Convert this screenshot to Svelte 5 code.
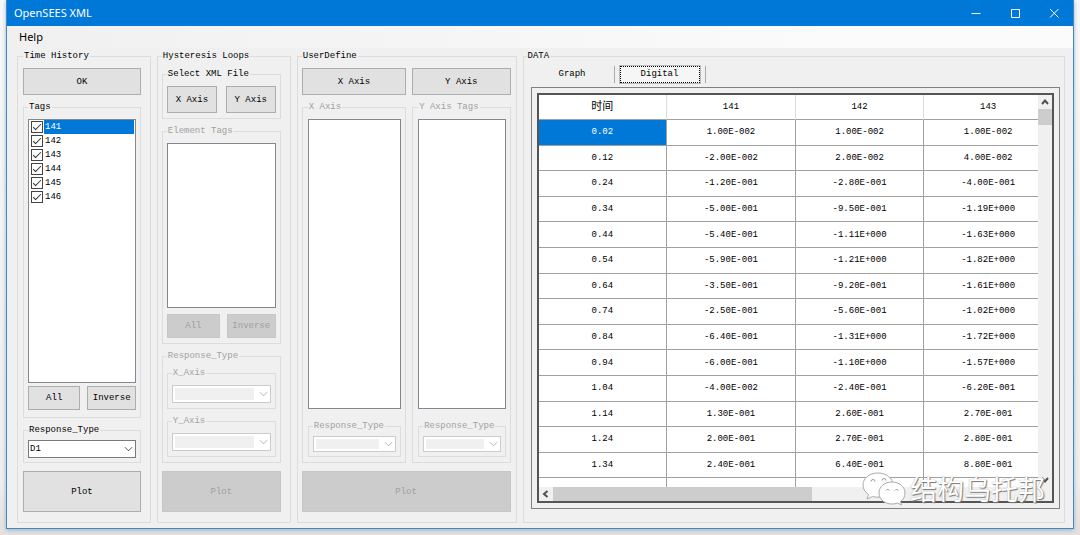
<script>
let tags = [
    { name: "141", checked: true },
    { name: "142", checked: true },
    { name: "143", checked: true },
    { name: "144", checked: true },
    { name: "145", checked: true },
    { name: "146", checked: true },
];
let selectedTag = "141";
let selectedRow = 0;
let tab = "digital";

const columns = ["时间", "141", "142", "143"];
const rows = [
    ["0.02", "1.00E-002", "1.00E-002", "1.00E-002"],
    ["0.12", "-2.00E-002", "2.00E-002", "4.00E-002"],
    ["0.24", "-1.20E-001", "-2.80E-001", "-4.00E-001"],
    ["0.34", "-5.00E-001", "-9.50E-001", "-1.19E+000"],
    ["0.44", "-5.40E-001", "-1.11E+000", "-1.63E+000"],
    ["0.54", "-5.90E-001", "-1.21E+000", "-1.82E+000"],
    ["0.64", "-3.50E-001", "-9.20E-001", "-1.61E+000"],
    ["0.74", "-2.50E-001", "-5.60E-001", "-1.02E+000"],
    ["0.84", "-6.40E-001", "-1.31E+000", "-1.72E+000"],
    ["0.94", "-6.00E-001", "-1.10E+000", "-1.57E+000"],
    ["1.04", "-4.00E-002", "-2.40E-001", "-6.20E-001"],
    ["1.14", "1.30E-001", "2.60E-001", "2.70E-001"],
    ["1.24", "2.00E-001", "2.70E-001", "2.80E-001"],
    ["1.34", "2.40E-001", "6.40E-001", "8.80E-001"],
    ["", "", "", ""],
];

const setAll = () => {
    tags = tags.map((t) => ({ ...t, checked: true }));
};
const invert = () => {
    tags = tags.map((t) => ({ ...t, checked: !t.checked }));
};
</script>

<div class="window">
    <header class="titlebar">
        <span class="title">OpenSEES XML</span>
        <button class="caption" aria-label="Minimize">
            <svg viewBox="0 0 10 10"><path d="M0.5 5.5H9.5" /></svg>
        </button>
        <button class="caption" aria-label="Maximize">
            <svg viewBox="0 0 10 10"><path d="M1.5 1.5H9.5V9.5H1.5Z" /></svg>
        </button>
        <button class="caption" aria-label="Close">
            <svg viewBox="0 0 10 10"><path d="M1 1L9.5 9.5M9.5 1L1 9.5" /></svg>
        </button>
    </header>
    <nav class="menubar"><button class="menu">Help</button></nav>

    <main>
        <fieldset class="column">
            <legend>Time History</legend>
            <button class="btn">OK</button>
            <fieldset class="grow tags">
                <legend>Tags</legend>
                <div class="list">
                    {#each tags as tag}
                        <label class="item">
                            <input type="checkbox" bind:checked={tag.checked} />
                            <span class:selected={tag.name === selectedTag}>{tag.name}</span>
                        </label>
                    {/each}
                </div>
                <div class="pair close">
                    <button class="btn small" on:click={setAll}>All</button>
                    <button class="btn small" on:click={invert}>Inverse</button>
                </div>
            </fieldset>
            <fieldset class="tight">
                <legend>Response_Type</legend>
                <div class="combo">
                    <select aria-label="Response type"><option>D1</option></select>
                    <svg viewBox="0 0 10 6"><path d="M1 1L5 5L9 1" /></svg>
                </div>
            </fieldset>
            <button class="btn plot">Plot</button>
        </fieldset>

        <fieldset class="column loops">
            <legend>Hysteresis Loops</legend>
            <fieldset>
                <legend>Select XML File</legend>
                <div class="pair even">
                    <button class="btn">X Axis</button>
                    <button class="btn">Y Axis</button>
                </div>
            </fieldset>
            <fieldset class="grow" disabled>
                <legend>Element Tags</legend>
                <div class="list"></div>
                <div class="pair">
                    <button class="btn small">All</button>
                    <button class="btn small">Inverse</button>
                </div>
            </fieldset>
            <fieldset class="types" disabled>
                <legend>Response_Type</legend>
                {#each ["X_Axis", "Y_Axis"] as axis}
                    <fieldset>
                        <legend>{axis}</legend>
                        <div class="combo">
                            <select aria-label={axis}></select>
                            <svg viewBox="0 0 10 6"><path d="M1 1L5 5L9 1" /></svg>
                        </div>
                    </fieldset>
                {/each}
            </fieldset>
            <button class="btn plot" disabled>Plot</button>
        </fieldset>

        <fieldset class="column user">
            <legend>UserDefine</legend>
            <div class="axes">
                {#each [["X Axis", "X Axis"], ["Y Axis", "Y Axis Tags"]] as [button, title]}
                    <div class="axis">
                        <button class="btn">{button}</button>
                        <fieldset class="grow" disabled>
                            <legend>{title}</legend>
                            <div class="list"></div>
                            <fieldset class="tight response">
                                <legend>Response_Type</legend>
                                <div class="combo">
                                    <select aria-label={`${button} response type`}></select>
                                    <svg viewBox="0 0 10 6"><path d="M1 1L5 5L9 1" /></svg>
                                </div>
                            </fieldset>
                        </fieldset>
                    </div>
                {/each}
            </div>
            <button class="btn plot" disabled>Plot</button>
        </fieldset>

        <fieldset class="column data">
            <legend>DATA</legend>
            <div class="tabs">
                <button class:active={tab === "graph"} on:click={() => (tab = "graph")}>
                    <span>Graph</span>
                </button>
                <button class:active={tab === "digital"} on:click={() => (tab = "digital")}>
                    <span>Digital</span>
                </button>
            </div>
            <div class="page">
                <div class="grid">
                    <div class="view">
                        <table>
                            <thead>
                                <tr>
                                    {#each columns as column}
                                        <th>{column}</th>
                                    {/each}
                                </tr>
                            </thead>
                            <tbody>
                                {#each rows as row, i}
                                    <tr>
                                        {#each row as cell, j}
                                            <td class:selected={i === selectedRow && j === 0}>{cell}</td>
                                        {/each}
                                    </tr>
                                {/each}
                            </tbody>
                        </table>
                    </div>
                    <div class="vscroll">
                        <svg viewBox="0 0 14 14"><path d="M4 9L7 5.5L10 9" /></svg>
                        <div class="thumb"></div>
                        <svg viewBox="0 0 14 14"><path d="M4 5L7 8.5L10 5" /></svg>
                    </div>
                    <div class="hscroll">
                        <svg viewBox="0 0 14 14"><path d="M8.5 4L5 7L8.5 10" /></svg>
                        <div class="thumb"></div>
                    </div>
                </div>
            </div>
        </fieldset>
    </main>

    <div class="watermark">
        <svg viewBox="0 0 44 36">
            <path
                class="bubble"
                d="M16 2C7 2 1 7.500 1 14C1 18 3 21 6.500 23.500L5 28L10.500 25.500C19 28 31 24 31 14C31 7.500 24.500 2 16 2Z"
            />
            <path
                class="bubble"
                d="M30 11C22 11 17 16 17 22C17 28.500 23 33 30 33C32 33 34 32.700 35.500 32L39.500 34L38.500 30.500C41.500 28.500 43 25.500 43 22C43 16 37.500 11 30 11Z"
            />
            <path class="eye" d="M9 10.500a2 2 0 0 1 4 0M20 9.500a2 2 0 0 1 4 0M24 19.500a2 2 0 0 1 3.500 0M33 19.500a2 2 0 0 1 3.500 0" />
        </svg>
        <span>结构乌托邦</span>
    </div>
</div>

<style>
:global(body) {
  background: linear-gradient(#f8f8f8, #f0eeee 90%, #e5dfdc);
}

.window {
  position: relative;
  box-sizing: border-box;
  display: flex;
  flex-direction: column;
  height: calc(100vh - 6px);
  min-height: 480px;
  margin: 0 6px 6px;
  border: 1px solid #4389c0;
  border-top: 0;
  background: #f0f0f0;
  box-shadow: 0 1px 4px #8fb4d3;
  font-family: "Liberation Mono", "Noto Sans CJK SC", monospace;
  font-size: 9px;
  line-height: 12px;
  color: #000;
}

button,
select {
  box-sizing: border-box;
  margin: 0;
  font: inherit;
  color: inherit;
}

.titlebar {
  display: flex;
  height: 26px;
  background: #0078d7;
  color: #fff;
  font-family: "Noto Sans", sans-serif;
  font-size: 11px;
}

.title {
  flex: 1;
  padding-left: 7px;
  line-height: 26px;
}

.caption {
  display: flex;
  align-items: center;
  justify-content: center;
  width: 39px;
  padding: 0;
  border: 0;
  background: none;
}

.caption svg {
  width: 10px;
  height: 10px;
  fill: none;
  stroke: #fff;
}

.menubar {
  height: 22px;
  background: linear-gradient(90deg, #f0f0f0, #fbfbfb 80%);
}

.menu {
  padding: 0 12px;
  border: 0;
  background: none;
  font-family: "Noto Sans", sans-serif;
  font-size: 11px;
  line-height: 22px;
}

main {
  display: grid;
  flex: 1;
  grid-template-columns: minmax(0, 134fr) minmax(0, 134fr) minmax(0, 220fr) minmax(0, 543fr);
  gap: 6px;
  min-height: 0;
  padding: 2px 8px 5px 10px;
}

fieldset {
  display: flex;
  flex-direction: column;
  gap: 6px;
  min-width: 0;
  min-height: 0;
  margin: 0;
  padding: 6px 4px 5px;
  border: 1px solid #dcdcdc;
}

fieldset:disabled,
fieldset:disabled fieldset {
  color: #a0a0a0;
}

legend {
  height: 12px;
  padding: 0 1px;
  white-space: nowrap;
}

.column {
  padding: 6px 9px 10px 5px;
}

.column.loops {
  padding-left: 4px;
}

.column.user {
  padding-right: 5px;
  padding-left: 4px;
}

.grow {
  flex: 1;
}

.tags {
  padding-bottom: 7px;
}

.tight {
  padding: 4px 4px;
}

.types {
  padding-top: 5px;
}

.btn {
  height: 27px;
  padding: 0;
  border: 1px solid #adadad;
  background: #e1e1e1;
}

.btn.small {
  height: 24px;
}

.btn.plot {
  flex: none;
  height: 41px;
  margin-top: 2px;
}

.btn:disabled {
  border-color: #c6c6c6;
  background: #ccc;
  color: #a0a0a0;
}

.pair {
  display: grid;
  grid-template-columns: 52fr 48fr;
  gap: 7px;
}

.pair.even {
  grid-template-columns: 1fr 1fr;
  gap: 9px;
}

.pair.close {
  margin-top: -3px;
}

.list {
  box-sizing: border-box;
  flex: 1;
  min-height: 0;
  overflow: hidden;
  border: 1px solid #828790;
  background: #fff;
}

.item {
  display: flex;
  align-items: center;
  height: 14px;
  padding: 0 1px 0 2px;
}

.item span {
  flex: 1;
  padding-left: 1px;
  line-height: 14px;
}

.item .selected,
td.selected {
  background: #0078d7;
  color: #fff;
}

.item input {
  appearance: none;
  box-sizing: border-box;
  width: 12px;
  height: 12px;
  margin: 0 1px 0 0;
  border: 1px solid #444;
  background: #fff;
}

.item input:checked::before {
  content: "";
  display: block;
  box-sizing: border-box;
  width: 8px;
  height: 4px;
  margin: 2px 0 0 1px;
  border: solid #333;
  border-width: 0 0 1px 1px;
  transform: rotate(-45deg);
}

.combo {
  position: relative;
  display: flex;
  align-items: center;
}

.combo select {
  appearance: none;
  flex: 1;
  width: 100%;
  height: 18px;
  padding: 0 18px 0 1px;
  border: 1px solid #7a7a7a;
  border-radius: 0;
  background: #fff;
}

.combo select:disabled {
  padding: 2px 16px 2px 2px;
  border-color: #ccc;
  background: linear-gradient(#f0f0f0, #f0f0f0) content-box, #fff;
  opacity: 1;
}

.combo svg {
  position: absolute;
  right: 3px;
  width: 9px;
  height: 6px;
  fill: none;
  stroke: #444;
  pointer-events: none;
}

.combo select:disabled + svg {
  stroke: #aaa;
}

.axes {
  display: grid;
  flex: 1;
  grid-template-columns: minmax(0, 104fr) minmax(0, 98fr);
  gap: 6px;
  min-height: 0;
}

.axis {
  display: flex;
  flex-direction: column;
  gap: 6px;
  min-height: 0;
}

.axis > fieldset {
  padding-left: 5px;
}

.response {
  margin-top: 5px;
}

.response select {
  height: 16px;
}

.data {
  gap: 4px;
  padding: 4px 4px 13px 7px;
}

.data legend {
  margin-left: -4px;
}

.tabs {
  display: flex;
  height: 17px;
}

.tabs button {
  width: 91px;
  padding: 0 5px;
  border: 0;
  border-right: 1px solid #aaa;
  background: none;
}

.tabs button:first-child {
  width: 84px;
}

.tabs span {
  display: block;
  line-height: 17px;
}

.tabs .active span {
  border: 1px dotted #000;
  outline: 1px solid #bbb;
  background: #f6f6f6;
  line-height: 15px;
}

.page {
  display: flex;
  flex: 1;
  min-height: 0;
  padding: 5px;
  border: 1px solid #808080;
}

.grid {
  display: grid;
  flex: 1;
  grid-template: minmax(0, 1fr) 14px / minmax(0, 1fr) 14px;
  border: 2px solid #555;
  background: #f0f0f0;
}

.view {
  overflow: hidden;
  background: #fff;
}

table {
  width: 103%;
  height: 409px;
  border-collapse: separate;
  border-spacing: 0;
  table-layout: fixed;
}

th,
td {
  height: 24px;
  padding: 0;
  border-right: 1px solid #a0a0a0;
  border-bottom: 1px solid #a0a0a0;
  font-weight: normal;
  text-align: center;
}

th {
  border-right-color: #ddd;
}

th:first-child {
  font-size: 11px;
}

.vscroll,
.hscroll {
  display: flex;
}

.vscroll {
  flex-direction: column;
}

.vscroll svg,
.hscroll svg {
  width: 14px;
  height: 14px;
  fill: none;
  stroke: #505050;
  stroke-width: 2;
}

.vscroll svg:last-child {
  margin-top: auto;
}

.thumb {
  background: #cdcdcd;
}

.vscroll .thumb {
  height: 16px;
}

.hscroll .thumb {
  width: 52%;
}

/* floats over the lower right corner of the grid */
.watermark {
  position: absolute;
  right: 28px;
  bottom: 21px;
  display: flex;
  align-items: center;
  gap: 4px;
  color: #fff;
  font-family: "Noto Sans CJK SC", sans-serif;
  font-size: 27px;
  line-height: 36px;
  text-shadow: 1px 1px 1px #777, 0 0 1px #999;
  pointer-events: none;
}

.watermark svg {
  width: 44px;
  height: 36px;
}

.bubble {
  fill: #fff;
  stroke: #aaa;
}

.eye {
  fill: none;
  stroke: #999;
}
</style>
